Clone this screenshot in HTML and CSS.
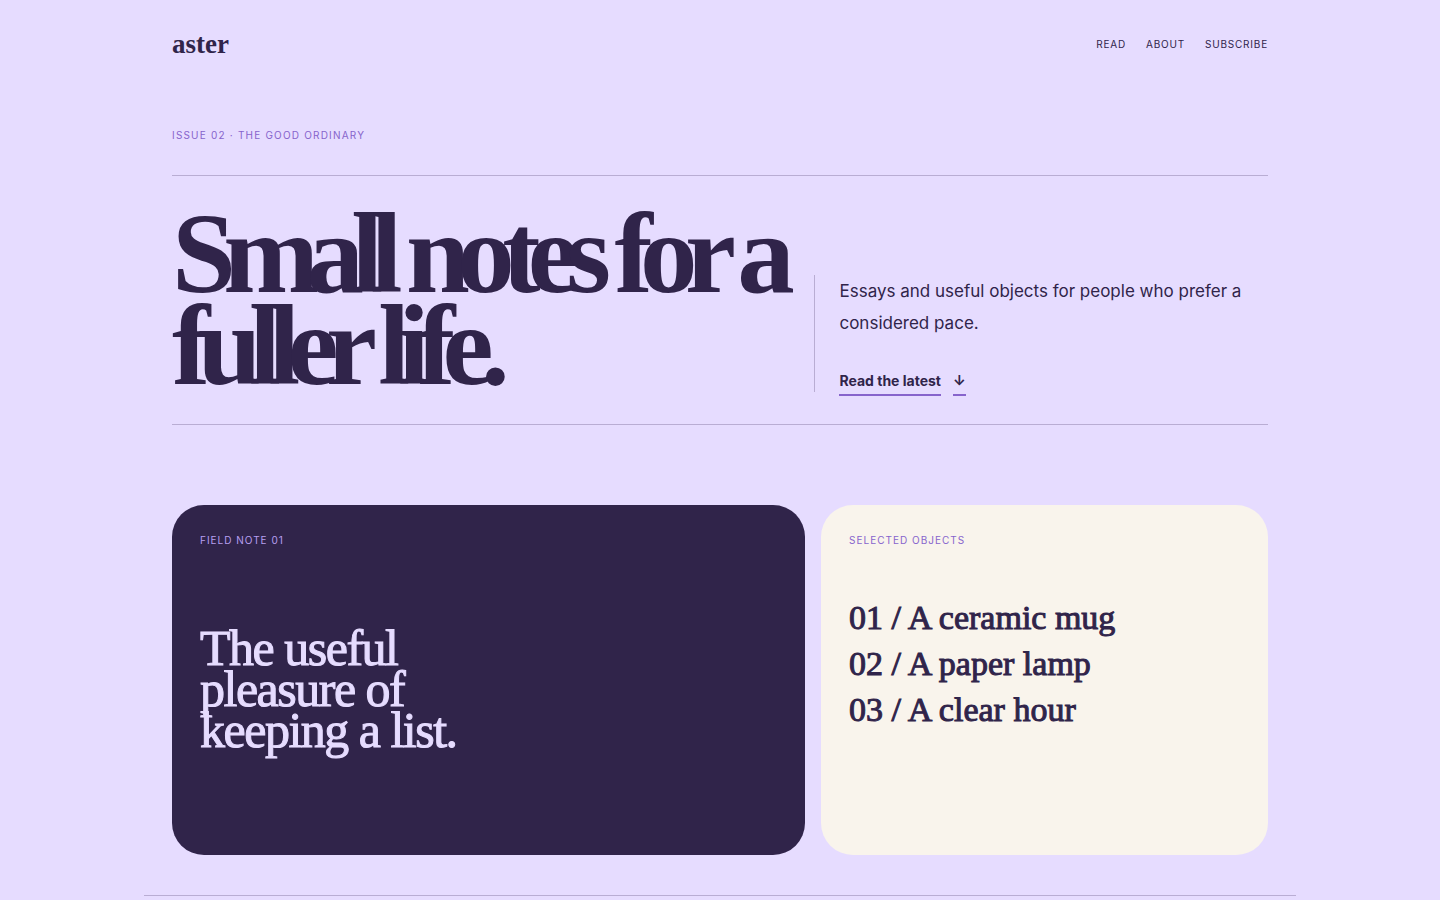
FILE: index.html
```html
<!DOCTYPE html>
<html lang="en">
<head>
<meta charset="utf-8">
<meta name="viewport" content="width=device-width, initial-scale=1">
<title>aster</title>
<link rel="stylesheet" href="styles.css">
</head>
<body>
<div class="page">
  <header class="masthead">
    <a class="logo" href="#">aster</a>
    <nav class="nav">
      <a href="#read">Read</a>
      <a href="#about">About</a>
      <a href="#subscribe">Subscribe</a>
    </nav>
  </header>
  <main class="main">
    <p class="label">Issue 02 · The good ordinary</p>
    <section class="hero">
      <h1 class="hero-title">Small notes for a fuller life.</h1>
      <div class="hero-aside">
        <p class="intro">Essays and useful objects for people who prefer a considered pace.</p>
        <a class="latest" href="#read"><span>Read the latest</span><span>↓</span></a>
      </div>
    </section>
    <section class="cards" id="read">
      <article class="card card-note">
        <p class="label">Field note 01</p>
        <h2 class="note-title">The useful pleasure of keeping a list.</h2>
      </article>
      <article class="card card-objects">
        <p class="label">Selected objects</p>
        <ul class="objects">
          <li>01 / A ceramic mug</li>
          <li>02 / A paper lamp</li>
          <li>03 / A clear hour</li>
        </ul>
      </article>
    </section>
  </main>
  <footer class="footer"></footer>
</div>
</body>
</html>
```
FILE: styles.css
```css
:root {
  --lilac: #e6dcff;
  --ink: #30244a;
  --violet: #8764cc;
  --rule: #b9add3;
  --cream: #f9f4ec;
  --serif: "Liberation Serif", serif;
  --sans: Inter, "Liberation Sans", sans-serif;
}

* {
  box-sizing: border-box;
}

body {
  margin: 0;
  background: var(--lilac);
  color: var(--ink);
  font-family: var(--sans);
}

h1, h2, p, ul {
  margin: 0;
  padding: 0;
}

a {
  color: inherit;
  text-decoration: none;
}

.page {
  max-width: 1152px;
  margin: 0 auto;
}

.masthead {
  display: flex;
  align-items: center;
  justify-content: space-between;
  padding: 28px 28px 0;
}

.logo {
  font: bold 27px/32px var(--serif);
}

.nav {
  display: flex;
  gap: 20px;
  font-size: 10px;
  line-height: 16px;
  letter-spacing: 0.08em;
  text-transform: uppercase;
}

.main {
  padding: 67px 28px 40px;
}

.label {
  color: var(--violet);
  font-size: 10px;
  line-height: 16px;
  letter-spacing: 0.12em;
  text-transform: uppercase;
}

.hero {
  display: grid;
  grid-template-columns: minmax(0, 17fr) minmax(0, 12fr);
  align-items: end;
  margin-top: 32px;
  padding: 32px 0;
  border-top: 1px solid var(--rule);
  border-bottom: 1px solid var(--rule);
}

.hero-title {
  font: bold 115px/92px var(--serif);
  letter-spacing: -0.11em;
}

.hero-aside {
  padding-left: 24px;
  border-left: 1px solid var(--rule);
}

.intro {
  font-size: 17px;
  line-height: 32px;
}

.latest {
  display: flex;
  gap: 12px;
  height: 25px;
  margin-top: 28px;
  font-size: 14px;
  font-weight: 700;
  line-height: 27px;
}

.latest span {
  height: 29px;
  border-bottom: 2px solid var(--violet);
}

.cards {
  display: grid;
  grid-template-columns: 17fr 12fr;
  gap: 16px;
  margin-top: 80px;
}

.card {
  min-height: 350px;
  padding: 28px;
  border-radius: 32px;
}

.card .label {
  line-height: 14px;
  letter-spacing: 0.1em;
}

.card-note {
  background: var(--ink);
  color: var(--lilac);
}

.card-note .label {
  color: #b79ff0;
}

.card-objects {
  background: var(--cream);
}

.note-title {
  max-width: 280px;
  margin-top: 81px;
  font: 50px/41px var(--serif);
  letter-spacing: -0.03em;
  -webkit-text-stroke: 1px currentColor;
}

.objects {
  margin-top: 48px;
  font: 34px/46px var(--serif);
  list-style: none;
  -webkit-text-stroke: 1px currentColor;
}

.footer {
  border-top: 1px solid var(--rule);
}
```
